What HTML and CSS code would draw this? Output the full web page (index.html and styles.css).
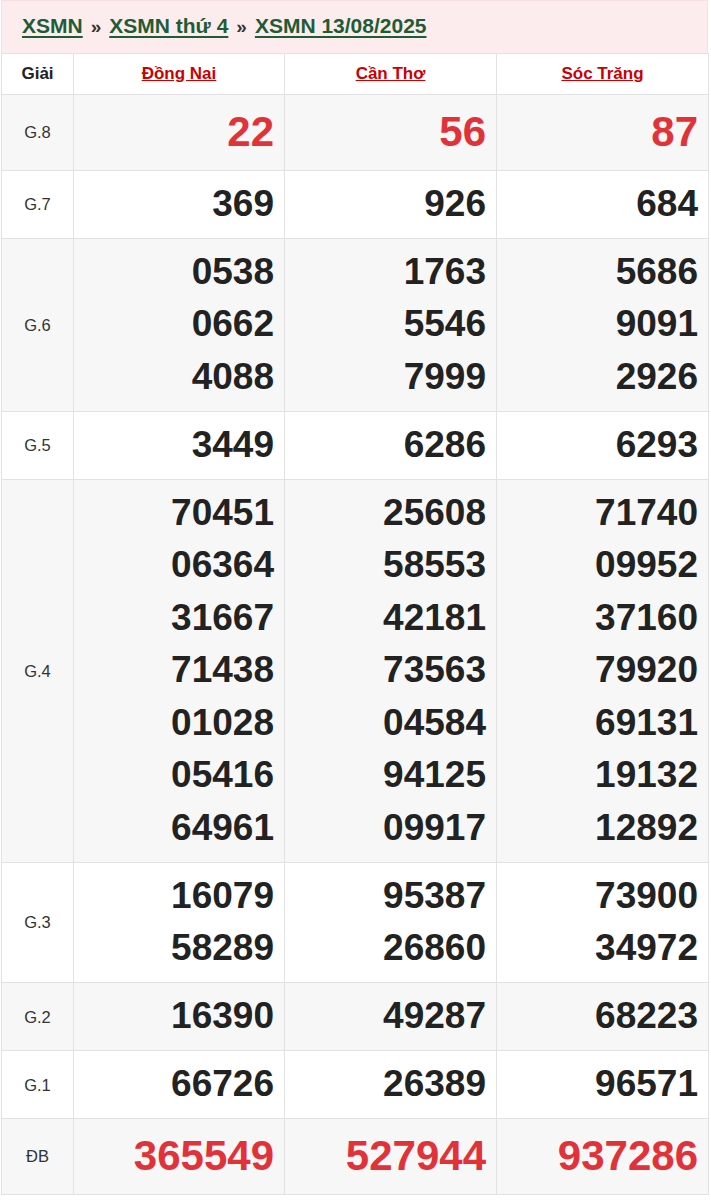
FILE: index.html
```html
<!DOCTYPE html>
<html lang="vi">
<head>
<meta charset="utf-8">
<title>XSMN 13/08/2025</title>
<link rel="stylesheet" href="styles.css">
</head>
<body>
<div class="wrap">
  <div class="crumb">
    <a href="#">XSMN</a><span class="sep">»</span><a href="#">XSMN thứ 4</a><span class="sep">»</span><a href="#">XSMN 13/08/2025</a>
  </div>
  <table class="kq">
    <colgroup><col class="c0"><col class="c1"><col class="c2"><col class="c3"></colgroup>
    <thead>
      <tr><th class="lbl">Giải</th><th><a href="#">Đồng Nai</a></th><th><a href="#">Cần Thơ</a></th><th><a href="#">Sóc Trăng</a></th></tr>
    </thead>
    <tbody>
      <tr class="alt"><td class="lbl">G.8</td><td class="red"><div>22</div></td><td class="red"><div>56</div></td><td class="red"><div>87</div></td></tr>
      <tr><td class="lbl">G.7</td><td><div>369</div></td><td><div>926</div></td><td><div>684</div></td></tr>
      <tr class="alt"><td class="lbl">G.6</td><td><div>0538</div><div>0662</div><div>4088</div></td><td><div>1763</div><div>5546</div><div>7999</div></td><td><div>5686</div><div>9091</div><div>2926</div></td></tr>
      <tr><td class="lbl">G.5</td><td><div>3449</div></td><td><div>6286</div></td><td><div>6293</div></td></tr>
      <tr class="alt"><td class="lbl">G.4</td>
        <td><div>70451</div><div>06364</div><div>31667</div><div>71438</div><div>01028</div><div>05416</div><div>64961</div></td>
        <td><div>25608</div><div>58553</div><div>42181</div><div>73563</div><div>04584</div><div>94125</div><div>09917</div></td>
        <td><div>71740</div><div>09952</div><div>37160</div><div>79920</div><div>69131</div><div>19132</div><div>12892</div></td></tr>
      <tr><td class="lbl">G.3</td><td><div>16079</div><div>58289</div></td><td><div>95387</div><div>26860</div></td><td><div>73900</div><div>34972</div></td></tr>
      <tr class="alt"><td class="lbl">G.2</td><td><div>16390</div></td><td><div>49287</div></td><td><div>68223</div></td></tr>
      <tr><td class="lbl">G.1</td><td><div>66726</div></td><td><div>26389</div></td><td><div>96571</div></td></tr>
      <tr class="alt"><td class="lbl">ĐB</td><td class="red"><div>365549</div></td><td class="red"><div>527944</div></td><td class="red"><div>937286</div></td></tr>
    </tbody>
  </table>
</div>
</body>
</html>
```

FILE: styles.css
```css
html, body {
  margin: 0;
  padding: 0;
  background: #fff;
}
body {
  font-family: "Liberation Sans", Arial, sans-serif;
  color: #222;
}
.wrap {
  width: 707px;
  margin-left: 1px;
}
.crumb {
  box-sizing: border-box;
  height: 53px;
  background: #fdeced;
  border: 1px solid #f6e0e0;
  border-bottom: none;
  padding: 13px 0 0 20px;
  font-size: 21px;
  font-weight: bold;
  line-height: 24px;
  color: #333;
}
.crumb a {
  color: #1f5c36;
  text-decoration: underline;
  text-underline-offset: 3px;
}
.crumb .sep {
  margin: 0 8px;
  color: #333;
  font-size: 19px;
}
.kq {
  width: 707px;
  border-collapse: collapse;
  table-layout: fixed;
}
.c0 { width: 72px; }
.c1 { width: 211px; }
.c2 { width: 212px; }
.c3 { width: 212px; }
.kq th, .kq td {
  border: 1px solid #e2e2e2;
}
.kq th {
  height: 40px;
  padding: 0;
  font-size: 17px;
  font-weight: bold;
  text-align: center;
  background: #fff;
}
.kq th a {
  color: #cc0000;
  text-decoration: underline;
}
.kq th.lbl {
  color: #222;
}
.kq td {
  padding: 7.25px 10px 7.25px 0;
  text-align: right;
  font-size: 37px;
  font-weight: bold;
  line-height: 52.5px;
  color: #222;
  vertical-align: middle;
}
.kq td.lbl {
  padding: 0;
  text-align: center;
  font-size: 16.5px;
  font-weight: normal;
  line-height: 20px;
  color: #333;
}
.kq td.red {
  font-size: 42px;
  line-height: 60px;
  color: #e03238;
}
.kq tr.alt td {
  background: #f7f7f7;
}
```
